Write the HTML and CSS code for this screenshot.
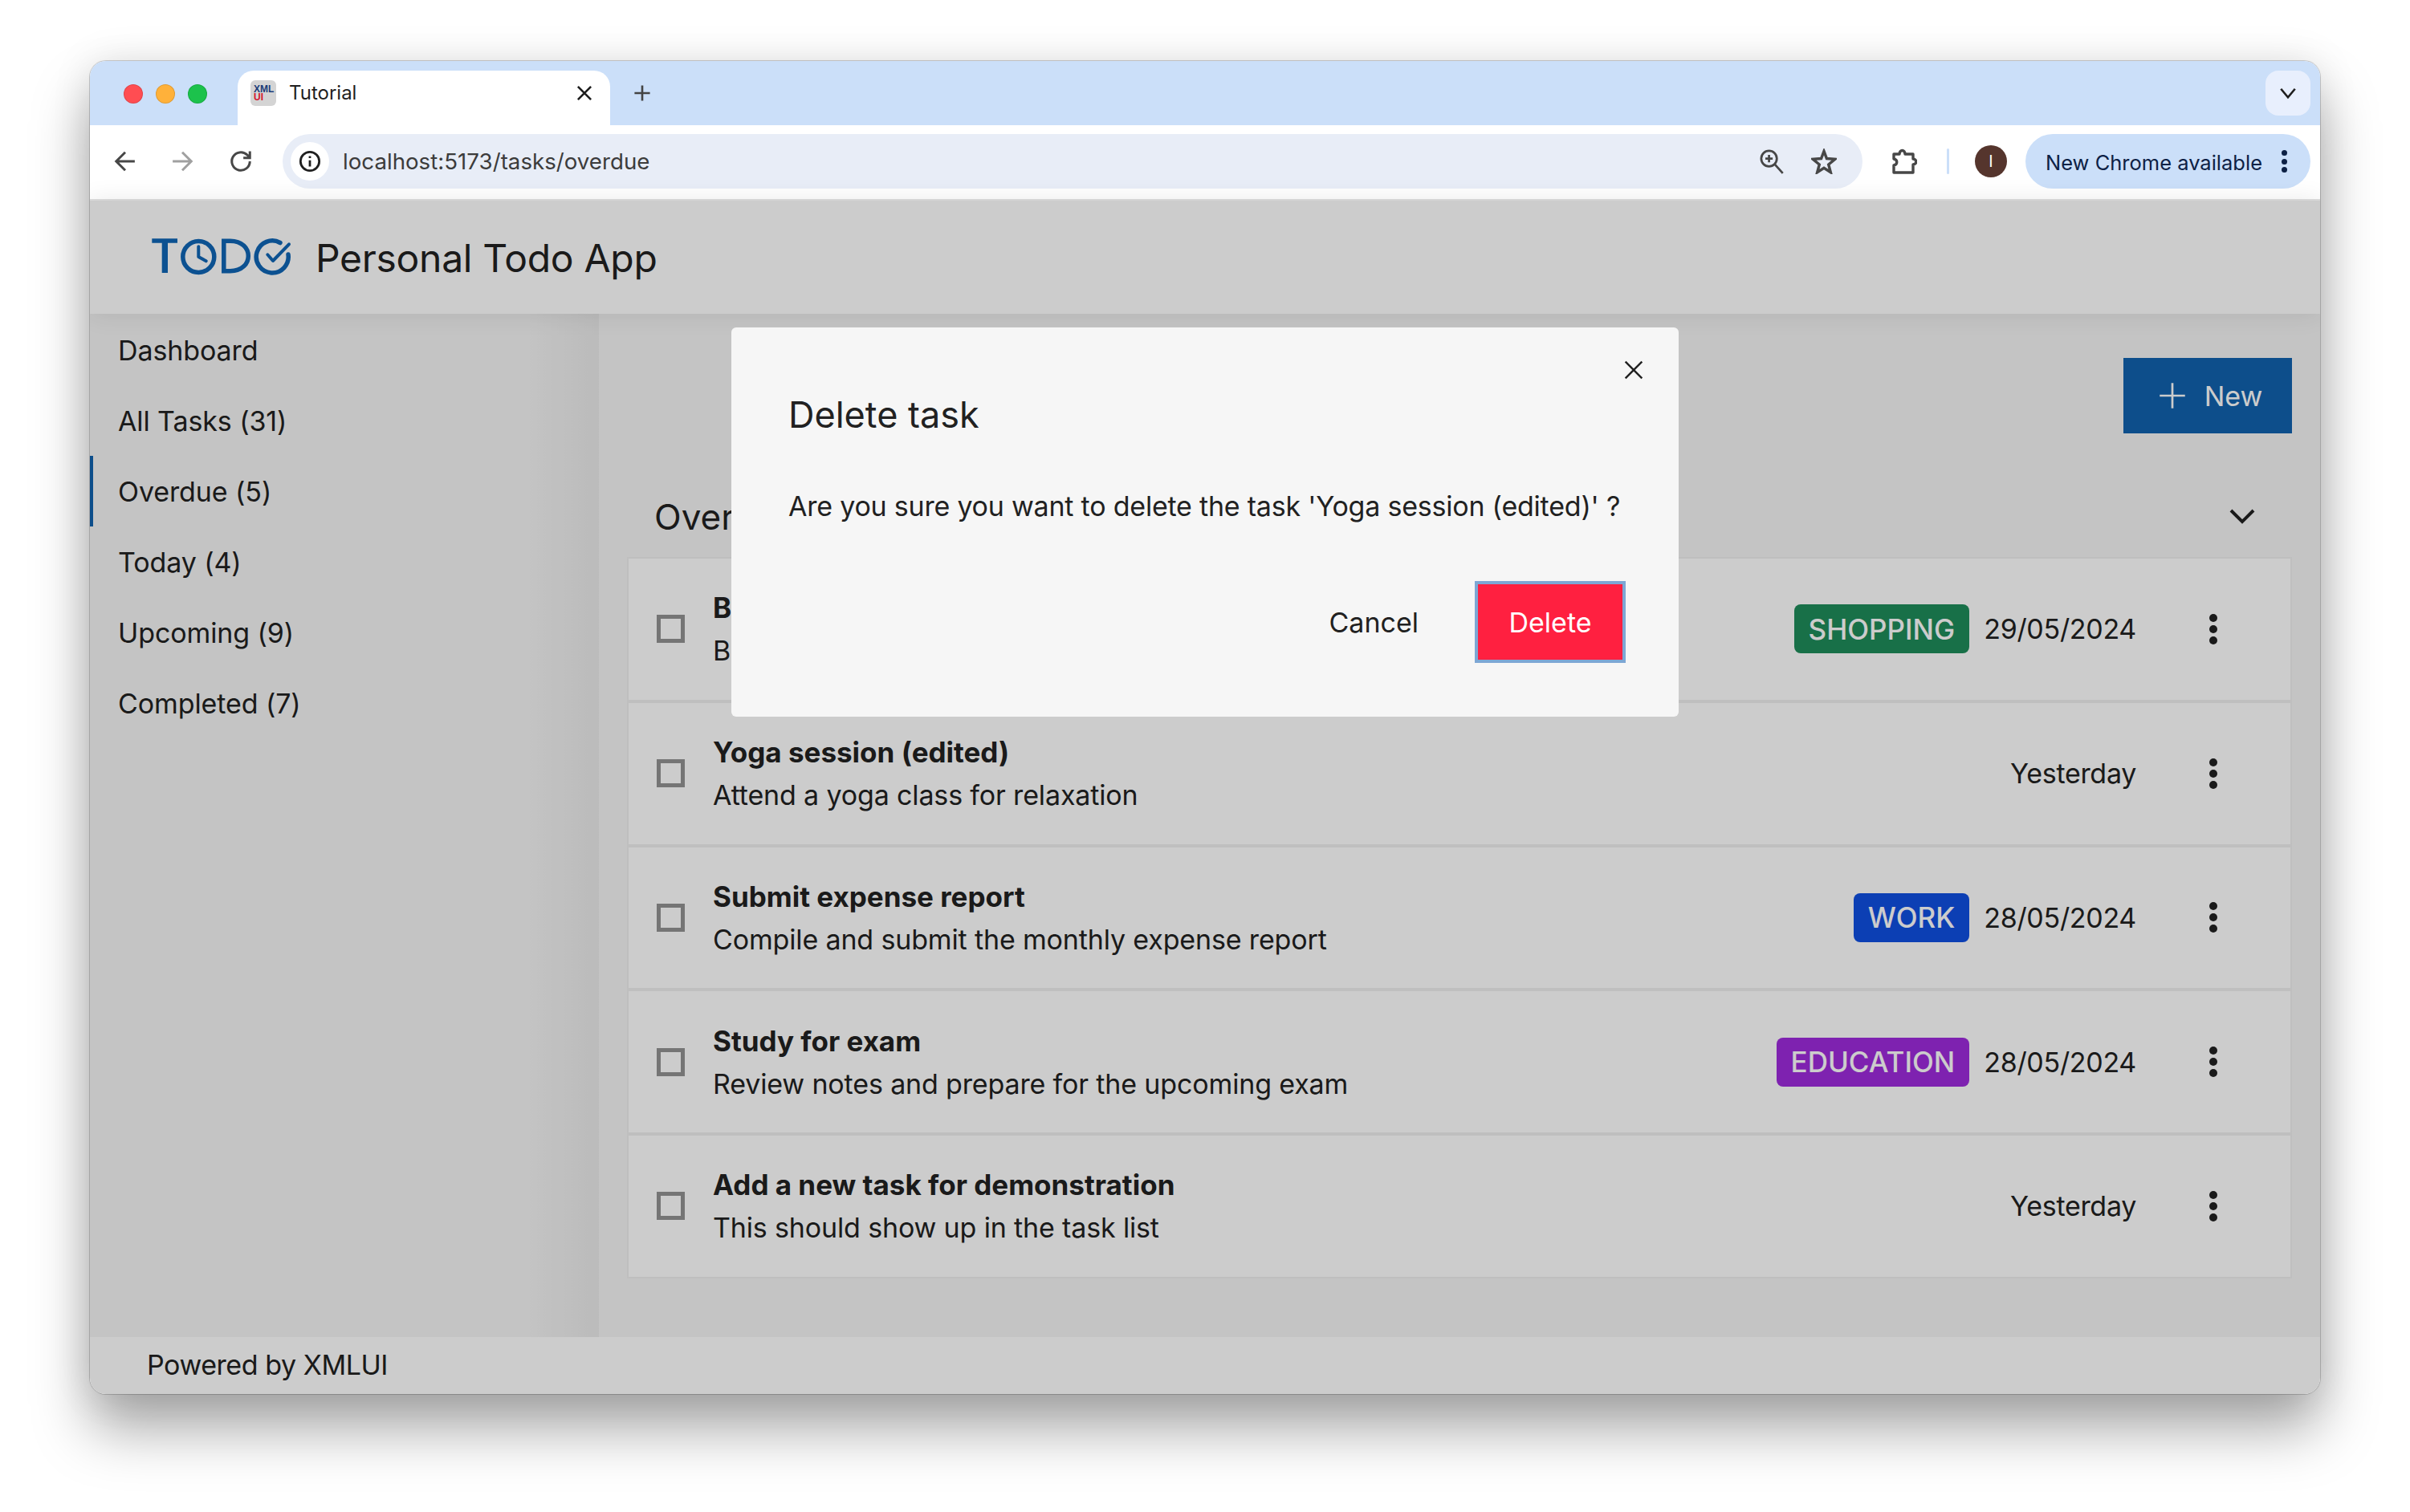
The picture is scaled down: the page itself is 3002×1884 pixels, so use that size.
FILE: index.html
```html
<!DOCTYPE html>
<html lang="en">
<head>
    <meta charset="UTF-8">
    <title>Tutorial</title>
    <link rel="stylesheet" href="styles.css">
</head>
<body>

<div class="window">

    <div class="tabstrip">
        <div class="lights">
            <span class="light red"></span>
            <span class="light amber"></span>
            <span class="light green"></span>
        </div>
        <div class="tab">
            <span class="favicon"><span class="fav-top">XML</span><span class="fav-bottom">UI</span></span>
            <span class="tab-title">Tutorial</span>
            <svg class="tab-close" viewBox="0 0 16 16"><path d="M3 3l10 10M13 3L3 13"/></svg>
        </div>
        <svg class="tab-plus" viewBox="0 0 20 20"><path d="M10 2v16M2 10h16"/></svg>
        <div class="tab-list">
            <svg viewBox="0 0 16 16"><path d="M3 5l5 6 5-6"/></svg>
        </div>
    </div>

    <div class="toolbar">
        <svg class="nav-icon" viewBox="0 0 24 24"><path d="M21.500 12H4M12 3l-9 9 9 9"/></svg>
        <svg class="nav-icon faded" viewBox="0 0 24 24"><path d="M2.500 12H20M12 3l9 9-9 9"/></svg>
        <svg class="nav-icon" viewBox="0 0 24 24"><path d="M21 12a9 9 0 1 1-2.800-6.500L21 8M21 2v6.500h-6.500"/></svg>
        <div class="urlbar">
            <span class="info"><svg viewBox="0 0 24 24"><circle cx="12" cy="12" r="10"/><path d="M12 11v6.500M12 6.500v2"/></svg></span>
            <span class="url">localhost:5173/tasks/overdue</span>
            <svg class="url-icon zoom-icon" viewBox="0 0 28 28"><circle cx="11" cy="11" r="8.500"/><path d="M17 17l9 10M11 7v8M7 11h8"/></svg>
            <svg class="url-icon star-icon" viewBox="0 0 28 28"><path d="M14 3l3 8 9 .7-7 5.800 2.300 8.500-7.300-4.800-7.300 4.800 2.300-8.500-7-5.800 9-.7z"/></svg>
        </div>
        <svg class="ext-icon" viewBox="0 0 32 32"><path d="M3 7h7c0-6 7-6 7 0h10v6c5 0 5 7 0 7v10H3v-9c5-1 5-7 0-8z"/></svg>
        <span class="divider"></span>
        <span class="avatar">I</span>
        <div class="update-pill">
            <span>New Chrome available</span>
            <span class="pill-dots"><i></i><i></i><i></i></span>
        </div>
    </div>

    <div class="app">
        <header class="app-header">
            <svg class="logo" viewBox="0 0 174 48">
                <path class="logo-fill" d="M.3 1.300H32v5.400H20V44h-7.300V6.700H.3z"/>
                <circle class="logo-line" cx="58.300" cy="24" r="19.500"/>
                <path class="logo-thin" d="M58.300 11.300V24l9.400 5.300"/>
                <path class="logo-line" d="M89.800 4.200v37.500h8c30 0 30-37.500 0-37.500z"/>
                <path class="logo-line round" d="M160 6.500A20 20 0 1 0 170 21"/>
                <path class="logo-thin" d="M144.300 21.300L151 29 171 8.300"/>
            </svg>
            <span class="app-name">Personal Todo App</span>
        </header>

        <div class="app-body">
            <nav class="sidebar">
                <a class="nav-item">Dashboard</a>
                <a class="nav-item">All Tasks (31)</a>
                <a class="nav-item active">Overdue (5)</a>
                <a class="nav-item">Today (4)</a>
                <a class="nav-item">Upcoming (9)</a>
                <a class="nav-item">Completed (7)</a>
            </nav>

            <main class="content">
                <div class="actions">
                    <button class="btn-new">
                        <svg viewBox="0 0 32 32"><path d="M16 2v28M2 16h28"/></svg>
                        New
                    </button>
                </div>

                <div class="section-head">
                    <h3>Overdue</h3>
                    <svg viewBox="0 0 32 20"><path d="M2 3l14 14L30 3"/></svg>
                </div>

                <ul class="tasks">
                    <li class="task">
                        <span class="check"></span>
                        <div class="task-text">
                            <strong>Buy groceries</strong>
                            <span>Buy milk, eggs and bread</span>
                        </div>
                        <span class="tag shopping">SHOPPING</span>
                        <span class="due">29/05/2024</span>
                        <span class="more"><i></i><i></i><i></i></span>
                    </li>
                    <li class="task">
                        <span class="check"></span>
                        <div class="task-text">
                            <strong>Yoga session (edited)</strong>
                            <span>Attend a yoga class for relaxation</span>
                        </div>
                        <span class="due">Yesterday</span>
                        <span class="more"><i></i><i></i><i></i></span>
                    </li>
                    <li class="task">
                        <span class="check"></span>
                        <div class="task-text">
                            <strong>Submit expense report</strong>
                            <span>Compile and submit the monthly expense report</span>
                        </div>
                        <span class="tag work">WORK</span>
                        <span class="due">28/05/2024</span>
                        <span class="more"><i></i><i></i><i></i></span>
                    </li>
                    <li class="task">
                        <span class="check"></span>
                        <div class="task-text">
                            <strong>Study for exam</strong>
                            <span>Review notes and prepare for the upcoming exam</span>
                        </div>
                        <span class="tag education">EDUCATION</span>
                        <span class="due">28/05/2024</span>
                        <span class="more"><i></i><i></i><i></i></span>
                    </li>
                    <li class="task">
                        <span class="check"></span>
                        <div class="task-text">
                            <strong>Add a new task for demonstration</strong>
                            <span>This should show up in the task list</span>
                        </div>
                        <span class="due">Yesterday</span>
                        <span class="more"><i></i><i></i><i></i></span>
                    </li>
                </ul>
            </main>
        </div>

        <footer class="app-footer">Powered by XMLUI</footer>

        <!-- dims everything in the app, the dialog sits on top -->
        <div class="overlay"></div>

        <div class="dialog">
            <svg class="dialog-close" viewBox="0 0 16 16"><path d="M2.500 2.500l11 11M13.500 2.500l-11 11"/></svg>
            <h2>Delete task</h2>
            <p>Are you sure you want to delete the task 'Yoga session (edited)' ?</p>
            <div class="dialog-buttons">
                <button class="btn-cancel">Cancel</button>
                <button class="btn-delete">Delete</button>
            </div>
        </div>
    </div>

</div>

</body>
</html>
```

FILE: styles.css
```css
html, body {
    margin: 0;
    height: 100%;
}

body {
    background-color: #fff;
    font-family: Inter, "Liberation Sans", sans-serif;
    color: #212121;
    padding: 76px 112px 0;
    box-sizing: border-box;
    overflow: hidden;
}

.window {
    width: 2778px;
    height: 1661px;
    border-radius: 20px;
    display: flex;
    flex-direction: column;
    overflow: hidden;
    box-shadow: 0 0 0 1px rgba(0, 0, 0, 0.18), 0 44px 70px rgba(0, 0, 0, 0.34), 0 0 50px rgba(0, 0, 0, 0.1);
}

/* browser chrome */
.tabstrip {
    height: 80px;
    flex: none;
    background-color: #cbdff9;
    display: flex;
    align-items: flex-end;
    box-sizing: border-box;
    padding-right: 12px;
}

.lights {
    display: flex;
    gap: 16px;
    padding: 0 0 27px 42px;
    width: 142px;
    align-self: flex-end;
}

.light {
    width: 24px;
    height: 24px;
    border-radius: 50%;
    box-sizing: border-box;
    border: 1px solid rgba(0, 0, 0, 0.12);
}

.red { background-color: #ff4d52; }
.amber { background-color: #ffb13a; }
.green { background-color: #1cc24c; }

.tab {
    width: 464px;
    height: 68px;
    background-color: #fff;
    border-radius: 20px 20px 0 0;
    display: flex;
    align-items: center;
    box-sizing: border-box;
    padding: 0 19px 12px 16px;
    font-size: 24px;
    line-height: 28px;
    color: #1f1f1f;
}

.favicon {
    width: 32px;
    height: 32px;
    background-color: #d4d4d4;
    border-radius: 6px;
    display: flex;
    flex-direction: column;
    font-family: "Liberation Sans", sans-serif;
    font-size: 12px;
    font-weight: bold;
    line-height: 10px;
    padding: 6px 0 0 4px;
    box-sizing: border-box;
}

.fav-top { color: #1c3c78; }
.fav-bottom { color: #d2142c; }

.tab-title {
    margin-left: 16px;
    flex: 1;
}

.tab-close {
    width: 26px;
    height: 26px;
    fill: none;
    stroke: #1f1f1f;
    stroke-width: 1.600;
}

.tab-plus {
    width: 24px;
    height: 24px;
    margin: 0 0 28px 28px;
    fill: none;
    stroke: #444;
    stroke-width: 2.200;
}

.tab-list {
    margin: 0 0 12px auto;
    width: 56px;
    height: 56px;
    border-radius: 16px;
    background-color: #e8effd;
    display: flex;
    align-items: center;
    justify-content: center;
}

.tab-list svg {
    width: 28px;
    height: 28px;
    fill: none;
    stroke: #1f1f1f;
    stroke-width: 1.500;
}

.toolbar {
    height: 94px;
    flex: none;
    background-color: #fff;
    border-radius: 16px 16px 0 0;
    border-bottom: 2px solid #dedede;
    box-sizing: border-box;
    display: flex;
    align-items: center;
    padding: 0 12px 2px 29px;
}

.nav-icon {
    width: 30px;
    height: 30px;
    flex: none;
    margin-right: 41px;
    fill: none;
    stroke: #474747;
    stroke-width: 2.400;
}

.nav-icon.faded {
    stroke: #a0a0a0;
    margin-right: 43px;
}

.nav-icon:nth-child(3) {
    margin-right: 0;
}

.urlbar {
    width: 1968px;
    height: 68px;
    flex: none;
    margin-left: 37px;
    border-radius: 34px;
    background-color: #e8edf7;
    display: flex;
    align-items: center;
    padding: 0 32px 0 10px;
    box-sizing: border-box;
}

.info {
    width: 48px;
    height: 48px;
    border-radius: 50%;
    background-color: #fff;
    display: flex;
    align-items: center;
    justify-content: center;
}

.info svg {
    width: 28px;
    height: 28px;
    fill: none;
    stroke: #1f1f1f;
    stroke-width: 2.400;
}

.url {
    margin-left: 17px;
    font-size: 27.700px;
    color: #3c3c3c;
    flex: 1;
}

.url-icon {
    width: 32px;
    height: 32px;
    fill: none;
    stroke: #474747;
    stroke-width: 2.400;
}

.star-icon {
    margin-left: 33px;
    stroke-width: 3;
}

.ext-icon {
    width: 32px;
    height: 32px;
    flex: none;
    margin-left: 36px;
    fill: none;
    stroke: #474747;
    stroke-width: 3.400;
    stroke-linejoin: round;
}

.divider {
    width: 3px;
    height: 32px;
    flex: none;
    margin-left: 37px;
    border-radius: 2px;
    background-color: #cbdff9;
}

.avatar {
    width: 40px;
    height: 40px;
    flex: none;
    margin-left: 32px;
    border-radius: 50%;
    background-color: #55352d;
    color: #fff;
    font-size: 20px;
    display: flex;
    align-items: center;
    justify-content: center;
}

.update-pill {
    width: 355px;
    height: 68px;
    flex: none;
    margin-left: 23px;
    border-radius: 34px;
    background-color: #cbdff9;
    color: #0d2145;
    font-size: 25.500px;
    display: flex;
    align-items: center;
    box-sizing: border-box;
    padding: 2px 0 0 25px;
}

.pill-dots {
    margin: -2px 0 0 24px;
    display: flex;
    flex-direction: column;
    gap: 3.500px;
}

.pill-dots i {
    width: 7px;
    height: 7px;
    border-radius: 50%;
    background-color: #0d2145;
}

/* the app itself */
.app {
    flex: 1;
    position: relative;
    display: flex;
    flex-direction: column;
    min-height: 0;
}

.app-header {
    height: 141px;
    flex: none;
    display: flex;
    align-items: center;
    background-color: #fff;
    padding-left: 77px;
    box-shadow: 0 0 30px rgba(0, 0, 0, 0.09);
    position: relative;
    z-index: 1;
}

.logo {
    width: 174px;
    height: 48px;
    margin-top: -1px;
}

.logo-fill { fill: #0f66b6; }

.logo-line {
    fill: none;
    stroke: #0f66b6;
    stroke-width: 5.500;
}

.logo-line.round {
    stroke-linecap: round;
}

.logo-thin {
    fill: none;
    stroke: #0f66b6;
    stroke-width: 4;
    stroke-linecap: round;
    stroke-linejoin: round;
}

.app-name {
    margin: 1px 0 0 30px;
    font-size: 48px;
    letter-spacing: -0.3px;
}

.app-body {
    flex: 1;
    display: flex;
    min-height: 0;
    background-color: #f5f5f5;
}

.sidebar {
    width: 634px;
    flex: none;
    box-sizing: border-box;
    padding-top: 1px;
    background-image: linear-gradient(to left, rgba(0, 0, 0, 0.045), transparent 90px);
    display: flex;
    flex-direction: column;
}

.nav-item {
    height: 88px;
    display: flex;
    align-items: center;
    padding-left: 35px;
    font-size: 34px;
    letter-spacing: -0.1px;
}

.nav-item.active {
    box-shadow: inset 4px 0 0 #1162ae;
}

.content {
    flex: 1;
    min-width: 0;
    padding: 55px 35px 0 35px;
}

.actions {
    display: flex;
    justify-content: flex-end;
}

.btn-new {
    width: 210px;
    height: 94px;
    border: none;
    background-color: #1162ae;
    color: #fff;
    font-family: inherit;
    font-size: 34px;
    display: flex;
    align-items: center;
    justify-content: center;
    gap: 22px;
    padding: 0 0 0 6px;
}

.btn-new svg {
    width: 36px;
    height: 36px;
    fill: none;
    stroke: #fff;
    stroke-width: 2.400;
}

.section-head {
    height: 154px;
    box-sizing: border-box;
    padding: 52px 46px 0 34px;
    display: flex;
    align-items: center;
    justify-content: space-between;
}

.section-head h3 {
    margin: 2px 0 0;
    font-size: 44px;
    font-weight: 400;
}

.section-head svg {
    width: 32px;
    height: 20px;
    fill: none;
    stroke: #212121;
    stroke-width: 4;
}

.tasks {
    list-style: none;
    margin: 0;
    padding: 0;
    border: 2px solid #efefef;
    background-color: #efefef;
    display: flex;
    flex-direction: column;
    gap: 4px;
}

.task {
    height: 175.750px;
    flex: none;
    background-color: #fff;
    display: flex;
    align-items: center;
    font-size: 34px;
    letter-spacing: -0.15px;
    padding: 0 91px 0 35px;
}

.check {
    width: 35px;
    height: 35px;
    box-sizing: border-box;
    border: 5px solid #939393;
    flex: none;
}

.task-text {
    margin-left: 35px;
    padding-top: 1px;
    flex: 1;
    min-width: 0;
    display: flex;
    flex-direction: column;
    gap: 12px;
    line-height: 41px;
}

.task-text strong {
    font-size: 35px;
    font-weight: 700;
    letter-spacing: 0;
}

.tag {
    height: 61px;
    padding: 0 18px;
    border-radius: 8px;
    color: #fff;
    font-size: 35px;
    font-weight: 500;
    letter-spacing: 0;
    display: flex;
    align-items: center;
    margin-right: 18px;
}

.shopping { background-color: #1f8d5a; }
.work { background-color: #104fe2; }
.education { background-color: #9e2bdc; }

.due {
    white-space: nowrap;
    flex: none;
    letter-spacing: -0.3px;
}

.more {
    width: 10px;
    margin-left: 91px;
    display: flex;
    flex-direction: column;
    gap: 4px;
}

.more i {
    width: 10px;
    height: 10px;
    border-radius: 50%;
    background-color: #212121;
}

.app-footer {
    height: 71px;
    flex: none;
    background-color: #fff;
    font-size: 34px;
    letter-spacing: -0.45px;
    display: flex;
    align-items: center;
    box-sizing: border-box;
    padding: 0 0 2px 71px;
}

.overlay {
    position: absolute;
    inset: 0;
    z-index: 2;
    background-color: rgba(0, 0, 0, 0.2);
}

.dialog {
    position: absolute;
    z-index: 3;
    left: 799px;
    top: 158px;
    width: 1180px;
    height: 485px;
    box-sizing: border-box;
    padding: 81px 66px 0 71px;
    background-color: #f6f6f6;
    border-radius: 6px;
}

.dialog h2 {
    margin: 0;
    font-size: 45px;
    font-weight: 400;
    line-height: 56px;
}

.dialog p {
    margin: 65px 0 0;
    font-size: 34px;
    letter-spacing: -0.22px;
    line-height: 42px;
    white-space: nowrap;
}

.dialog-close {
    position: absolute;
    top: 38px;
    right: 41px;
    width: 30px;
    height: 30px;
    fill: none;
    stroke: #212121;
    stroke-width: 1.300;
}

.dialog-buttons {
    margin-top: 72px;
    display: flex;
    justify-content: flex-end;
    align-items: center;
    gap: 70px;
}

.btn-cancel {
    border: none;
    background: none;
    padding: 0;
    font-family: inherit;
    font-size: 34px;
    color: #212121;
}

.btn-delete {
    width: 188px;
    height: 102px;
    border: 4px solid #7da7d4;
    background-color: #ff2040;
    color: #fff;
    font-family: inherit;
    font-size: 34px;
}
```
